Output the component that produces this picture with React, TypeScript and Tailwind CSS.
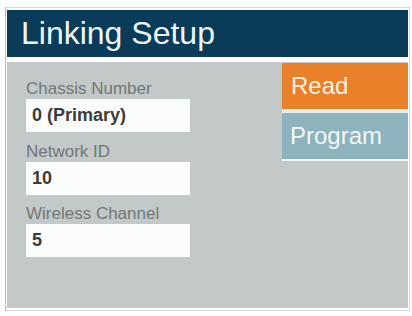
const fields = [
  { label: 'Chassis Number', value: '0 (Primary)', gap: 'mt-0' },
  { label: 'Network ID', value: '10', gap: 'mt-[10px]' },
  { label: 'Wireless Channel', value: '5', gap: 'mt-[9px]' },
];

export default function App() {
  return (
    <div className="w-[412px] h-[316px] bg-white pt-[7px] pl-[5px] pr-[2px] font-['Liberation_Sans',Arial,sans-serif]">
      <div className="h-[304px] border border-[#d6d9d9] border-l-[#b9bcbc] bg-white pl-[1px] pt-[2px] pr-[1px]">
        {/* Title bar */}
        <div className="h-[47px] bg-[#0a3b59] pl-[14px] flex items-center">
          <h1 className="text-[32px] leading-none text-[#eef6fa] pb-[2px]">Linking Setup</h1>
        </div>

        {/* Body */}
        <div className="mt-[5px] h-[246px] bg-[#c2c9c8] flex">
          <div className="flex-1 pl-[19px] pt-[17px]">
            {fields.map((f) => (
              <div key={f.label} className={f.gap}>
                <div className="h-[20px] leading-[20px] text-[17px] text-[#727777]">{f.label}</div>
                <div className="w-[164px] h-[33px] bg-[#fbfcfc] flex items-center pl-[6px] text-[18px] font-bold text-[#3a3c3c]">
                  {f.value}
                </div>
              </div>
            ))}
          </div>

          {/* Actions */}
          <div className="w-[126px] mt-[1px] flex flex-col">
            <button className="h-[46px] bg-[#e8812a] text-left pl-[9px] text-[24px] text-[#fdf1e2] border-b-[4px] border-[#e6ebeb] box-content">
              Read
            </button>
            <button className="h-[46px] bg-[#8eb2be] text-left pl-[8px] text-[24px] text-[#f3f8f9] border-b-[2px] border-[#f2f5f5] box-content">
              Program
            </button>
          </div>
        </div>
      </div>
    </div>
  );
}
